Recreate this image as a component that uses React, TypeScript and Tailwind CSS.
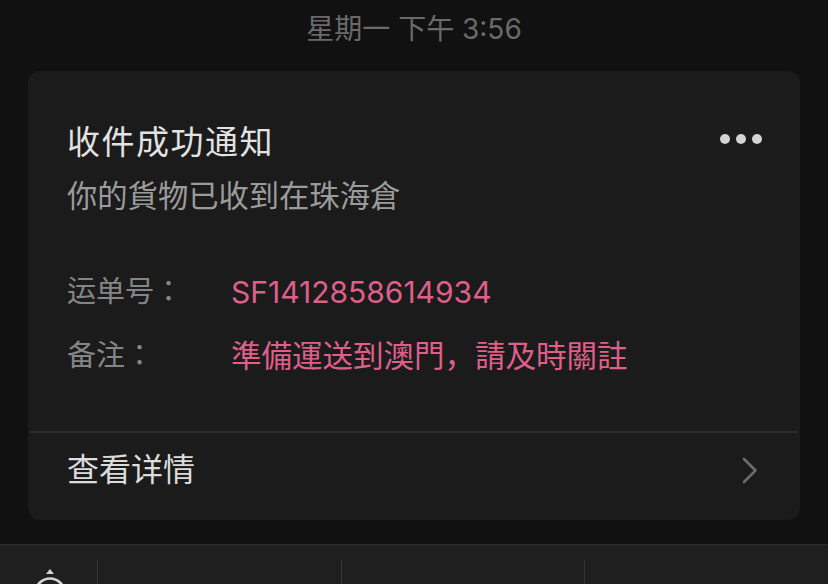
const font = { fontFamily: 'Inter, "Noto Sans CJK SC", "Noto Sans CJK TC", sans-serif' }
const jp = { fontFamily: 'Inter, "Noto Sans CJK JP", sans-serif' }

function KeyboardToggle() {
  return (
    <svg width="40" height="30" viewBox="0 0 40 30" className="mt-[24px]">
      <path d="M20 0 L24 5 L16 5 Z" fill="#d4d4d4" />
      <circle cx="20" cy="24" r="14.5" fill="none" stroke="#d4d4d4" strokeWidth="2.6" />
    </svg>
  )
}

export default function App() {
  return (
    <div className="w-[828px] h-[584px] bg-[#111111] overflow-hidden flex flex-col" style={font}>
      {/* time */}
      <div className="h-[58px] shrink-0 flex items-center justify-center text-[28px] text-[#6a6a6a]">
        星期一 下午 3:56
      </div>

      {/* notification card */}
      <div className="shrink-0 mt-[13px] mx-[28px] rounded-[12px] bg-[#1b1b1b] pt-[49px]">
        <div className="px-[39px]">
          <div className="flex items-center justify-between">
            <span className="text-[33px] leading-[44px] text-[#e2e2e2] tracking-[1.5px]">收件成功通知</span>
            <div className="flex gap-[6px] mr-[-1px] mb-[7px]">
              <span className="w-[10px] h-[10px] rounded-full bg-[#d3d3d7]" />
              <span className="w-[10px] h-[10px] rounded-full bg-[#d3d3d7]" />
              <span className="w-[10px] h-[10px] rounded-full bg-[#d3d3d7]" />
            </div>
          </div>
          <div className="mt-[12px] text-[30.3px] leading-[40px] text-[#9b9b9b]">你的貨物已收到在珠海倉</div>

          <div className="mt-[54px] flex text-[29px] leading-[44px]" style={jp}>
            <span className="w-[164px] text-[#858585]">运单号：</span>
            <span className="text-[#df5f89] text-[30px]">SF1412858614934</span>
          </div>
          <div className="mt-[20px] flex text-[29px] leading-[44px]" style={jp}>
            <span className="w-[164px] text-[#858585]">备注：</span>
            <span className="text-[#df5f89] text-[30.5px]">準備運送到澳門，請及時關註</span>
          </div>
        </div>

        <div className="mt-[53px] mx-[2px] h-[1.5px] bg-[#2b2b2b]" />

        <div className="h-[87px] flex items-center justify-between pl-[39px] pr-[42px] pb-[12px]">
          <span className="text-[32px] leading-[44px] text-[#dcdcdc]">查看详情</span>
          <svg width="16" height="27" viewBox="0 0 16 27">
            <path d="M2 2 L13.5 13.5 L2 25" fill="none" stroke="#6c6c6c" strokeWidth="2.6" strokeLinecap="round" strokeLinejoin="round" />
          </svg>
        </div>
      </div>

      {/* bottom menu bar */}
      <div className="shrink-0 mt-[24px] h-[80px] bg-[#1f1f1f] border-t border-[#2c2c2c] flex">
        <div className="w-[97px] flex justify-center pl-[2px]">
          <KeyboardToggle />
        </div>
        <div className="flex-1 mt-[15px] border-l border-[#333333]" />
        <div className="flex-1 mt-[15px] border-l border-[#333333]" />
        <div className="flex-1 mt-[15px] border-l border-[#333333]" />
      </div>
    </div>
  )
}
